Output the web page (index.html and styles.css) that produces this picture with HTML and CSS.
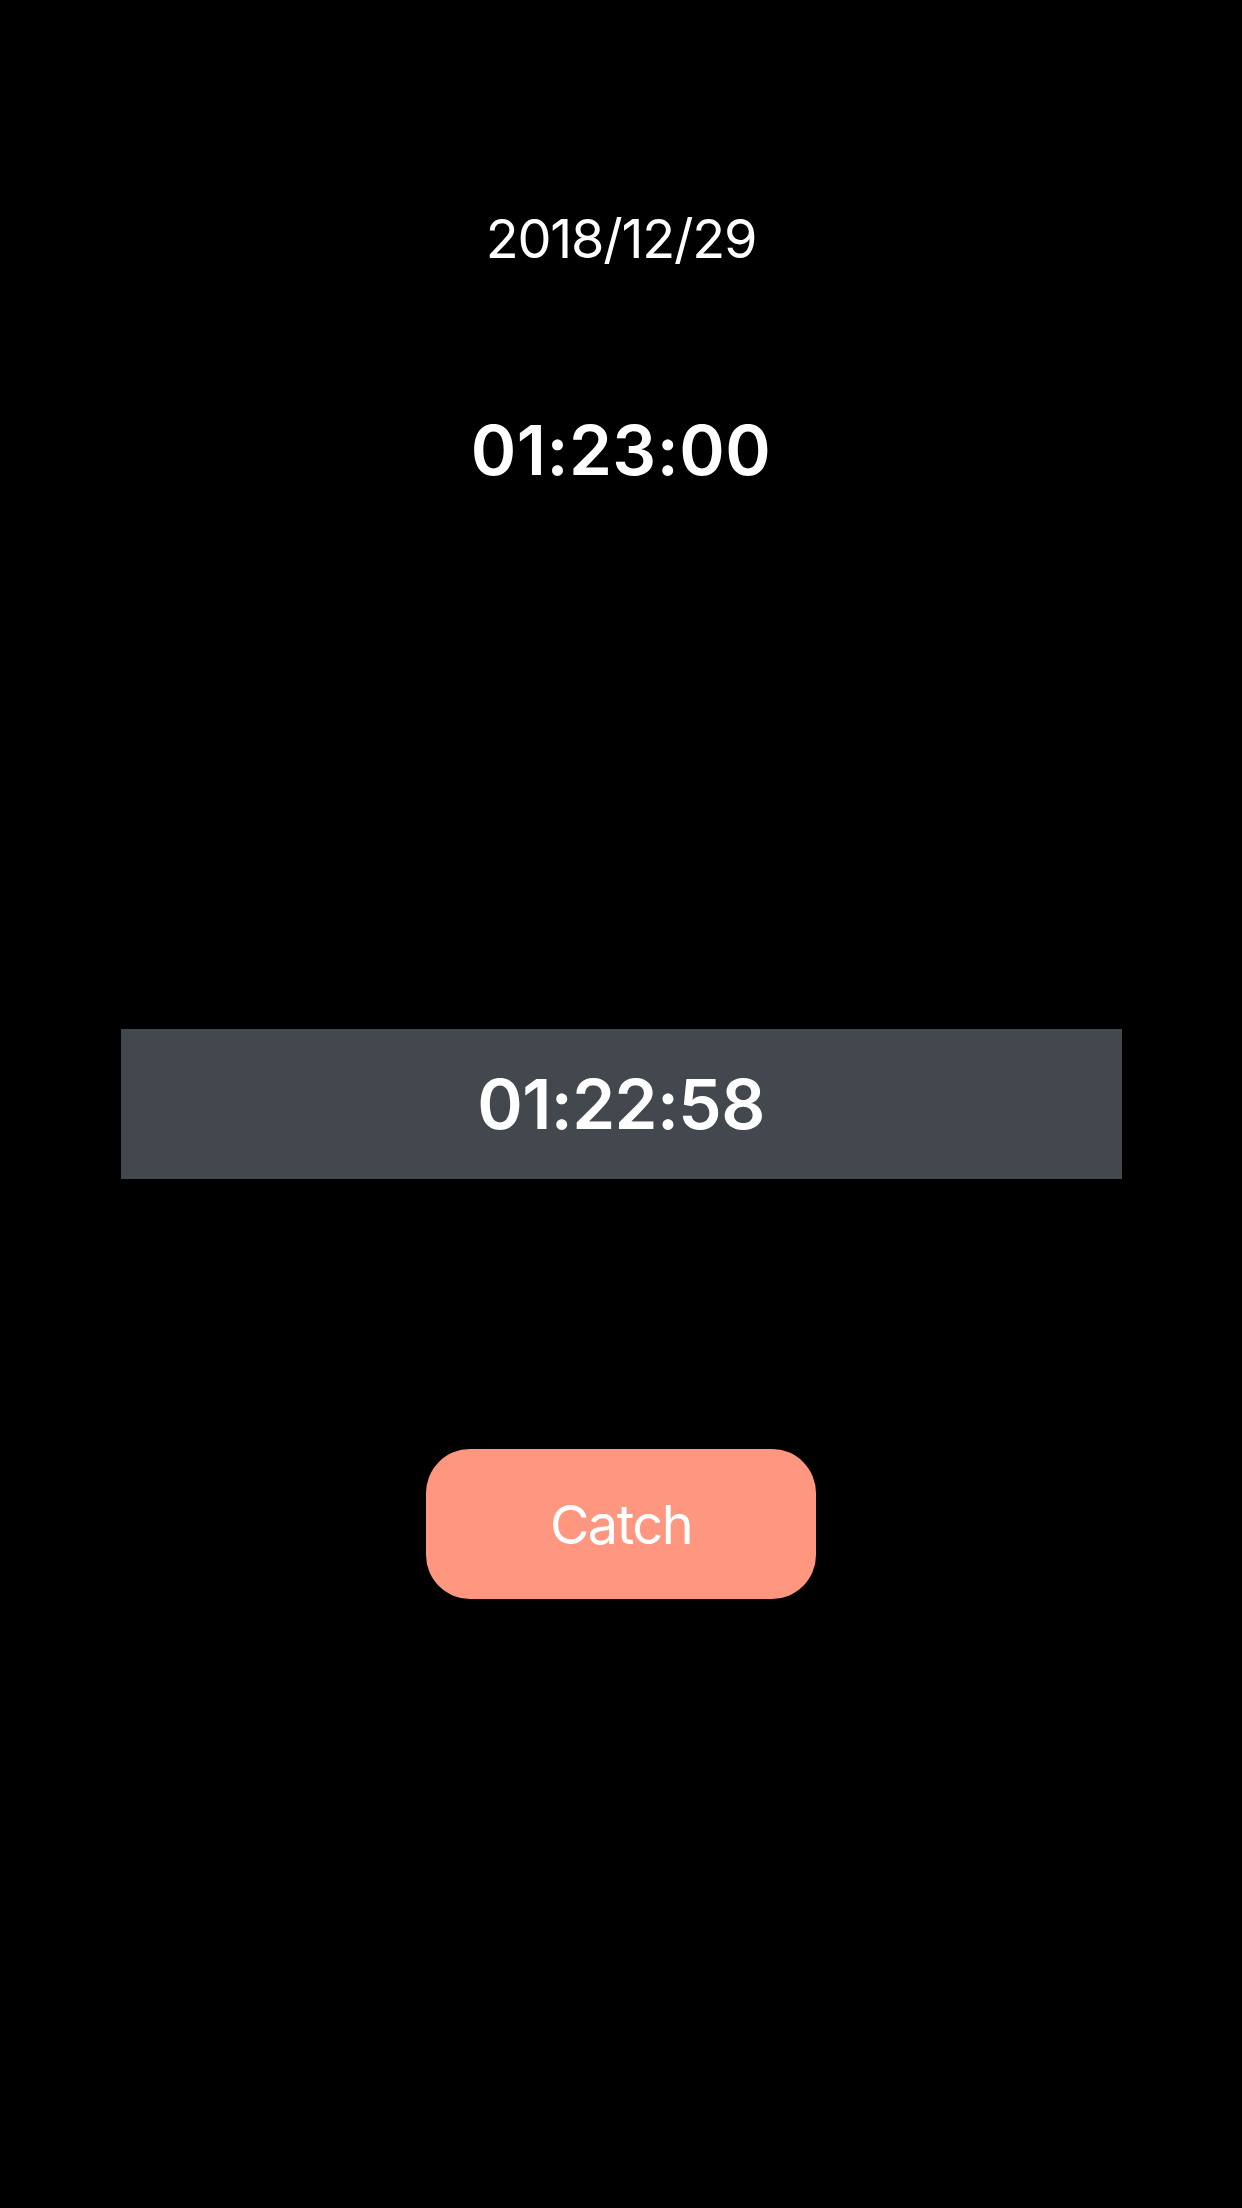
FILE: index.html
```html
<!DOCTYPE html>
<html lang="en">
<head>
<meta charset="utf-8">
<title>Catch</title>
<link rel="stylesheet" href="styles.css">
</head>
<body>
<main class="screen">
  <div class="date">2018/12/29</div>
  <div class="time">01:23:00</div>
  <div class="lap"><span class="lap-time">01:22:58</span></div>
  <button class="catch-btn">Catch</button>
</main>
</body>
</html>
```

FILE: styles.css
```css
html, body {
  margin: 0;
  padding: 0;
  background: #000;
}
body {
  font-family: Inter, "Noto Sans", "Liberation Sans", sans-serif;
  color: #fff;
}
.screen {
  width: 1242px;
  min-height: 2208px;
  display: flex;
  flex-direction: column;
  align-items: center;
}
.date {
  margin-top: 207px;
  font-size: 54px;
  line-height: 64px;
  font-weight: 400;
  letter-spacing: -1.2px;
}
.time {
  margin-top: 139px;
  font-size: 69px;
  line-height: 80px;
  font-weight: 600;
  letter-spacing: 0.5px;
}
.lap {
  margin-top: 539px;
  width: 1001px;
  height: 150px;
  background: #43474e;
  display: flex;
  align-items: center;
  justify-content: center;
}
.lap-time {
  font-size: 69px;
  line-height: 80px;
  font-weight: 600;
  letter-spacing: -0.6px;
}
.catch-btn {
  margin-top: 270px;
  width: 390px;
  height: 150px;
  border: none;
  border-radius: 44px;
  background: #ff9780;
  color: #fff;
  font-family: inherit;
  font-size: 54px;
  font-weight: 400;
  letter-spacing: -1.5px;
  padding: 0;
}
```
